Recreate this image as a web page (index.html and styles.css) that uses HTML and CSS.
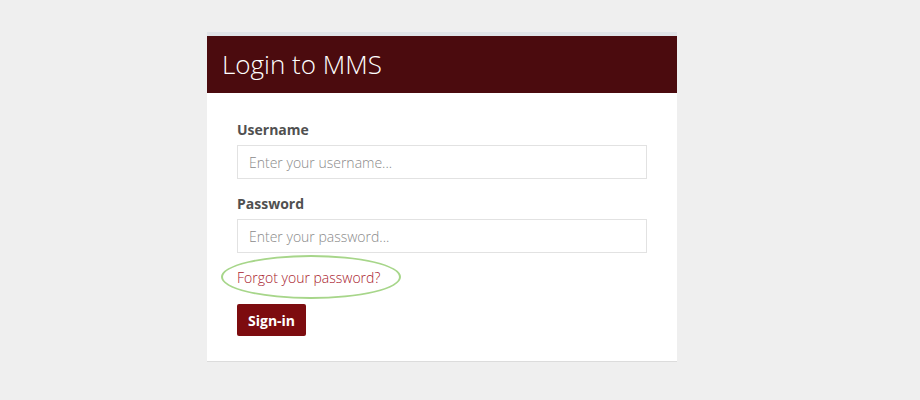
FILE: index.html
```html
<!DOCTYPE html>
<html>
<head>
<meta charset="utf-8">
<link rel="stylesheet" href="styles.css">
</head>
<body>
<div class="page">
  <div class="card">
    <div class="card-header">Login to MMS</div>
    <form class="card-body">
      <label class="label">Username</label>
      <input class="input" type="text" placeholder="Enter your username...">
      <label class="label label-second">Password</label>
      <input class="input" type="password" placeholder="Enter your password...">
      <div class="forgot">
        <a class="forgot-link" href="#">Forgot your password?</a>
        <span class="highlight"></span>
      </div>
      <button class="btn" type="button">Sign-in</button>
    </form>
  </div>
</div>
</body>
</html>
```
FILE: styles.css
```css
html, body {
  margin: 0;
  padding: 0;
  background: #efefef;
  font-family: "Open Sans", "DejaVu Sans", sans-serif;
}
.page {
  padding: 32px 0 0 207px;
}
.card {
  width: 470px;
  background: #fff;
  border-top: 4px solid #e1e4e8;
  border-bottom: 1px solid #dcdcdc;
}
.card-header {
  height: 57px;
  background: #4b0b0e;
  color: #fff;
  font-size: 26px;
  font-weight: 300;
  line-height: 57px;
  padding-left: 15px;
}
.card-body {
  display: flex;
  flex-direction: column;
  align-items: flex-start;
  padding: 27px 30px 25px 30px;
  margin: 0;
}
.label {
  font-size: 14px;
  font-weight: 700;
  color: #505050;
  line-height: 20px;
  margin-bottom: 5px;
}
.label-second {
  margin-top: 15px;
}
.input {
  box-sizing: border-box;
  width: 410px;
  height: 34px;
  border: 1px solid #e2e2e2;
  padding: 0 11px;
  font-family: "Open Sans", sans-serif;
  font-size: 14px;
  font-weight: 300;
  color: #555;
  outline: none;
  margin: 0;
}
.input::placeholder {
  color: #8a8a8a;
}
.forgot {
  position: relative;
  margin-top: 14px;
  line-height: 20px;
}
.forgot-link {
  font-size: 14px;
  font-weight: 300;
  color: #a8202b;
  text-decoration: none;
}
.highlight {
  position: absolute;
  left: -16px;
  top: -12px;
  width: 176px;
  height: 40px;
  border: 2.5px solid #a7d68a;
  border-radius: 50%;
}
.btn {
  margin-top: 16px;
  height: 32px;
  padding: 0 11px;
  background: #7d0c0f;
  color: #fff;
  border: none;
  border-radius: 2px;
  font-family: "Open Sans", sans-serif;
  font-size: 14px;
  font-weight: 700;
}
```
